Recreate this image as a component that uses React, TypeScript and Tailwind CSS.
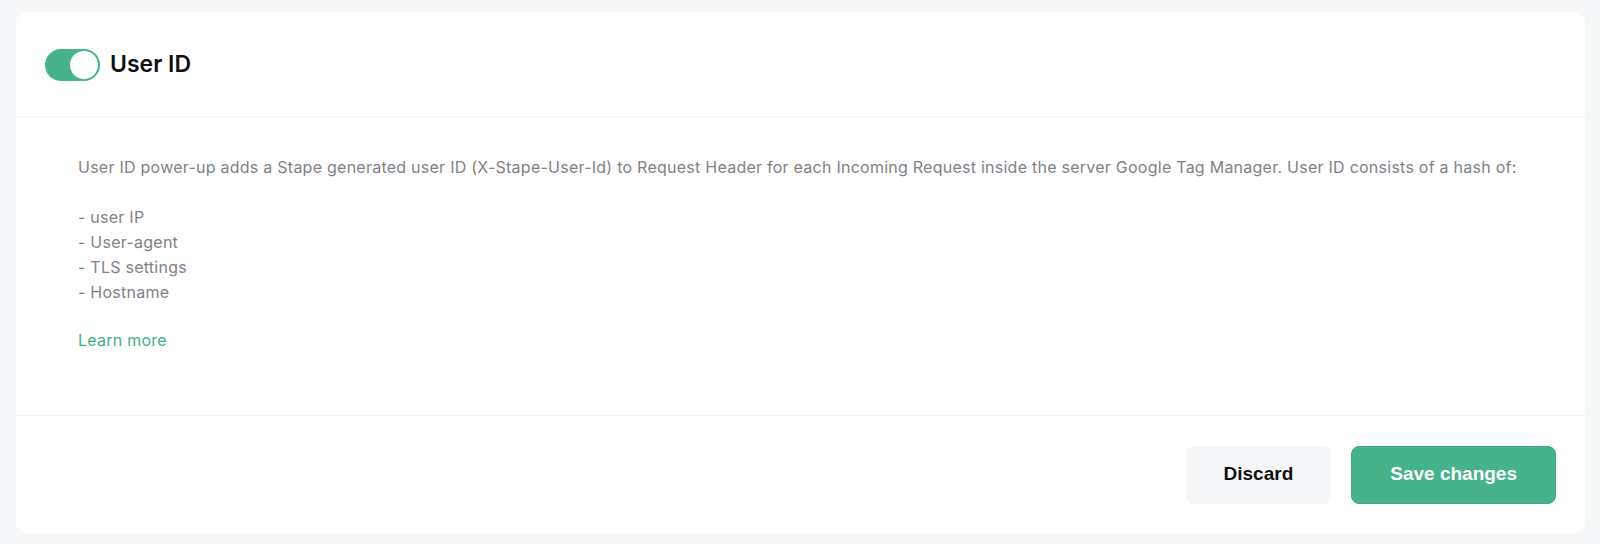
import { useState } from "react";

const items = ["user IP", "User-agent", "TLS settings", "Hostname"];

function Toggle({ on, onChange }: { on: boolean; onChange: (v: boolean) => void }) {
  return (
    <button
      type="button"
      onClick={() => onChange(!on)}
      className={`flex h-[32px] w-[55px] shrink-0 items-center rounded-full p-[2px] ${
        on ? "justify-end bg-[#46b38b]" : "justify-start bg-[#d9dce1]"
      }`}
    >
      <span className="h-[28px] w-[28px] rounded-full bg-white" />
    </button>
  );
}

export default function App() {
  const [enabled, setEnabled] = useState(true);

  return (
    <div className="min-h-[544px] bg-[#f7f8fa] pt-[12px] pr-[15px] pb-[11px] pl-[16px] font-['Inter','Noto_Sans',sans-serif]">
      <div className="rounded-[10px] bg-white">
        <div className="flex h-[105px] items-center gap-[10px] border-b border-[#f1f2f4] pl-[29px] pt-[1px]">
          <Toggle on={enabled} onChange={setEnabled} />
          <h2 className="text-[23px] font-semibold text-[#111]">User ID</h2>
        </div>

        <div className="border-b border-[#f1f2f4] pt-[38px] pb-[62px] pl-[62px] text-[16px] leading-[25px] tracking-[0.25px] text-[#808285]">
          <p>
            User ID power-up adds a Stape generated user ID (X-Stape-User-Id) to Request Header for each Incoming
            Request inside the server Google Tag Manager. User ID consists of a hash of:
          </p>
          <ul className="mt-[25px]">
            {items.map((item) => (
              <li key={item}>- {item}</li>
            ))}
          </ul>
          <a href="#" className="mt-[23px] block w-fit text-[#3fae86]">
            Learn more
          </a>
        </div>

        <div className="flex h-[117px] items-center justify-end gap-[20px] pr-[29px] font-['Liberation_Sans',Arial,sans-serif]">
          <button
            type="button"
            className="h-[58px] rounded-[8px] bg-[#f6f7f9] px-[38px] text-[19px] font-bold text-[#111]"
          >
            Discard
          </button>
          <button
            type="button"
            className="h-[58px] rounded-[8px] border border-[#3fa880] bg-[#46b38b] px-[38px] text-[19px] font-bold text-white"
          >
            Save changes
          </button>
        </div>
      </div>
    </div>
  );
}
